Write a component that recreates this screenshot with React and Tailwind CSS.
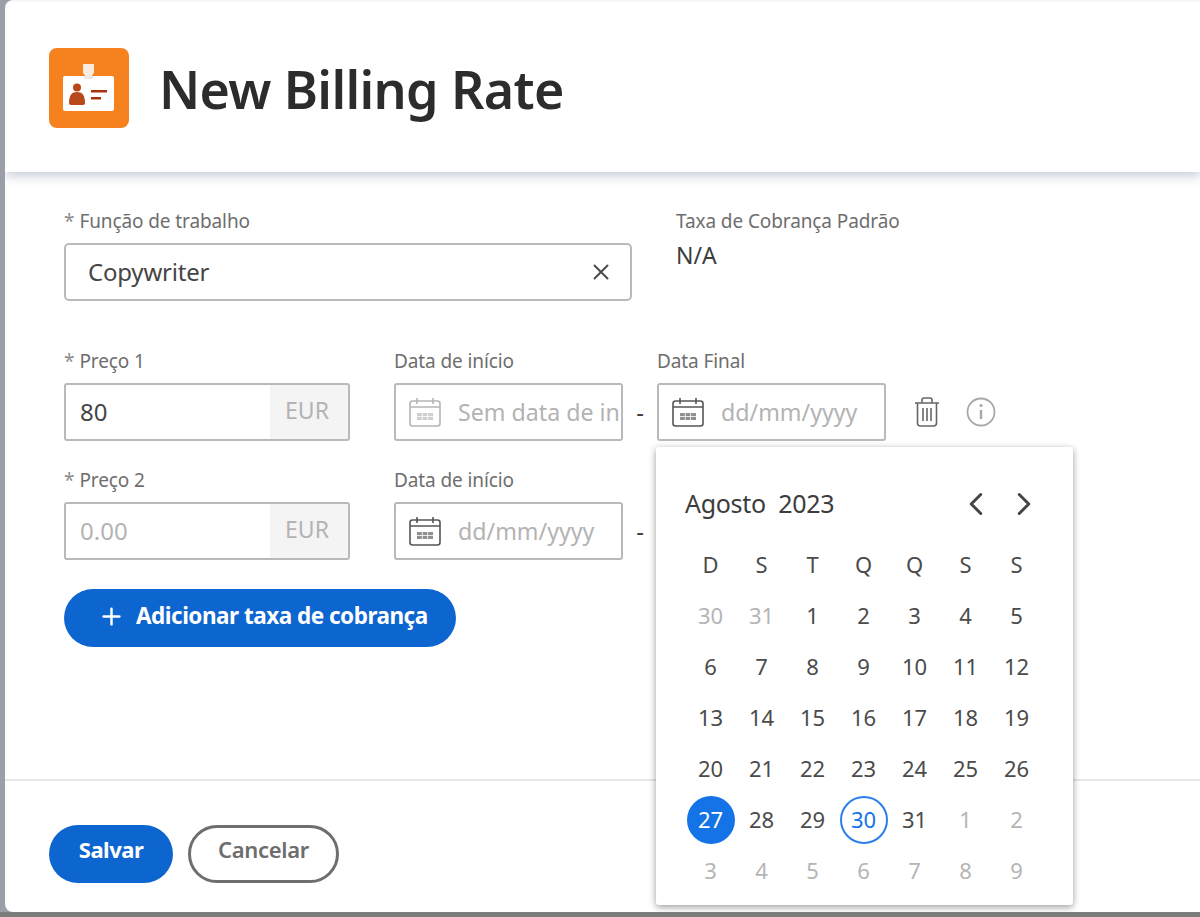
import React from "react";
import { X, Plus, ChevronLeft, ChevronRight } from "lucide-react";

const weekDays = ["D", "S", "T", "Q", "Q", "S", "S"];

// muted = day outside of the current month
const days = [
    [30, 1], [31, 1], [1], [2], [3], [4], [5],
    [6], [7], [8], [9], [10], [11], [12],
    [13], [14], [15], [16], [17], [18], [19],
    [20], [21], [22], [23], [24], [25], [26],
    [27], [28], [29], [30], [31], [1, 1], [2, 1],
    [3, 1], [4, 1], [5, 1], [6, 1], [7, 1], [8, 1], [9, 1],
];

function CalendarIcon({ faded }) {
    return (
        <svg width="32" height="30" viewBox="0 0 32 30" fill="none" stroke="currentColor" strokeWidth="1.6" className={faded ? "text-[#b5b5b5] shrink-0" : "text-[#555555] shrink-0"}>
            <rect x="1" y="4" width="30" height="25" rx="2.5" />
            <path d="M1 10h30M8 1v6M24 1v6" />
            <rect x="8" y="16" width="16" height="7" fill="currentColor" stroke="none" opacity="0.65" />
            <path d="M13.3 16v7M18.6 16v7M8 19.5h16" stroke="#ffffff" strokeWidth="0.8" />
        </svg>
    );
}

function BadgeLogo() {
    return (
        <div className="w-[80px] h-[80px] rounded-[8px] bg-[#f5821f] flex items-center justify-center shrink-0">
            <svg width="52" height="48" viewBox="0 0 52 48">
                <path d="M20 0h11v9l-3 4h-5l-3-4z" fill="#f9ecdf" />
                <rect x="0" y="12" width="51" height="35" rx="2" fill="#ffffff" />
                <path d="M20 12h11l-2 3h-7z" fill="#e9e9e9" />
                <circle cx="14" cy="23.5" r="4" fill="#b8481a" />
                <path d="M6 39c0-8 3-11 8-11s8 3 8 11c0 2-2 2-3 2h-10c-1 0-3 0-3-2z" fill="#b8481a" />
                <path d="M28 26h16v2.4H28zM28 33h10v2.4H28z" fill="#a8320f" />
            </svg>
        </div>
    );
}

function FieldLabel({ required, children }) {
    return (
        <div className="h-[22px] flex items-center text-[19px] leading-[22px] text-[#6e6e6e] whitespace-nowrap tracking-[-0.1px]">
            {required && <span className="text-[#8a8a8a] mr-[5px]">*</span>}
            {children}
        </div>
    );
}

function PriceField({ label, value }) {
    return (
        <div className="w-[286px]">
            <FieldLabel required>{label}</FieldLabel>
            <div className="mt-[11px] h-[58px] border-2 border-[#b9b9b9] rounded-[3px] flex overflow-hidden">
                <div className={value ? "flex-1 px-[14px] flex items-center text-[24px] text-[#454545]" : "flex-1 px-[14px] flex items-center text-[24px] text-[#b3b3b3]"}>
                    {value || "0.00"}
                </div>
                <div className="w-[78px] bg-[#f4f4f4] flex items-center justify-center pb-[3px] pr-[4px] text-[23px] text-[#b3b3b3]">EUR</div>
            </div>
        </div>
    );
}

function DateField({ label, text, faded, width = "w-[229px]" }) {
    return (
        <div className={width}>
            <FieldLabel>{label}</FieldLabel>
            <div className="mt-[11px] h-[58px] border-2 border-[#b9b9b9] rounded-[3px] flex items-center pl-[13px] gap-[17px] overflow-hidden">
                <CalendarIcon faded={faded} />
                <span className="text-[23.2px] text-[#b3b3b3] whitespace-nowrap">{text}</span>
            </div>
        </div>
    );
}

function DatePopup() {
    return (
        <div className="absolute left-[651px] top-[445px] w-[417px] h-[458px] bg-white rounded-[3px] shadow-[0_2px_7px_rgba(0,0,0,0.4)] px-[29px] pt-[37px] z-10">
            <div className="flex items-center justify-between h-[40px]">
                <div className="text-[25px] text-[#3c3c3c] tracking-[-0.3px]">Agosto&nbsp;&nbsp;2023</div>
                <div className="flex items-center gap-[10px] mr-[1px] text-[#454545]">
                    <ChevronLeft size={38} strokeWidth={1.9} />
                    <ChevronRight size={38} strokeWidth={1.9} />
                </div>
            </div>
            <div className="grid grid-cols-7 w-[357px] mt-[15px] text-[22px] text-[#4b4b4b] text-center">
                {weekDays.map((d, i) => (
                    <div key={i} className="h-[51px] flex items-center justify-center">{d}</div>
                ))}
                {days.map(([n, muted], i) => {
                    let cls = "w-[48px] h-[48px] rounded-full flex items-center justify-center";
                    if (i === 28) cls += " bg-[#1473e6] text-white";
                    if (i === 31) cls += " border-2 border-[#2680eb] text-[#1473e6]";
                    if (muted) cls += " text-[#b5b5b5]";
                    return (
                        <div key={i} className="h-[51px] flex items-center justify-center">
                            <div className={cls}>{n}</div>
                        </div>
                    );
                })}
            </div>
        </div>
    );
}

export default function App() {
    return (
        <div className="h-[917px] w-[1200px] overflow-hidden bg-[#7b7b7b] font-['Noto_Sans','Open_Sans',sans-serif]">
            <div className="h-[912px] bg-[#9a9ea6] pl-[5px]">
                <div className="relative h-[912px] bg-white border-t-2 border-[#f7f7f7] rounded-tl-[8px] rounded-bl-[8px] flex flex-col overflow-hidden">
                    {/* Header */}
                    <header className="h-[170px] shrink-0 pl-[44px] pt-[46px] flex items-start gap-[30px] shadow-[0_4px_10px_rgba(130,145,170,0.45)] z-[1]">
                        <BadgeLogo />
                        <h1 className="text-[52px] leading-[82px] font-semibold text-[#2c2c2c] tracking-[-0.65px] whitespace-nowrap">New Billing Rate</h1>
                    </header>

                    {/* Form */}
                    <div className="flex-1 pl-[59px] pt-[38px]">
                        <div className="flex">
                            <div className="w-[568px]">
                                <FieldLabel required>Função de trabalho</FieldLabel>
                                <div className="mt-[11px] h-[58px] border-2 border-[#b9b9b9] rounded-[5px] flex items-center justify-between pl-[22px] pr-[16px] text-[24px] text-[#454545]">
                                    <span className="tracking-[-0.2px]">Copywriter</span>
                                    <X size={26} strokeWidth={1.8} className="text-[#4b4b4b]" />
                                </div>
                            </div>
                            <div className="ml-[44px]">
                                <FieldLabel>Taxa de Cobrança Padrão</FieldLabel>
                                <div className="mt-[7px] text-[23px] leading-[32px] text-[#3c3c3c]">N/A</div>
                            </div>
                        </div>

                        <div className="mt-[49px] flex items-start">
                            <PriceField label="Preço 1" value="80" />
                            <div className="ml-[44px]">
                                <DateField label="Data de início" text="Sem data de início" faded />
                            </div>
                            <div className="w-[34px] text-center mt-[33px] text-[24px] leading-[58px] text-[#3c3c3c]">-</div>
                            <DateField label="Data Final" text="dd/mm/yyyy" />
                            <div className="ml-[27px] mt-[33px] h-[58px] flex items-center gap-[25px]">
                                <svg width="28" height="30" viewBox="0 0 28 30" fill="none" stroke="#666666" strokeWidth="1.6">
                                    <path d="M2 6h24M9 6V3c0-1 1-2 2-2h6c1 0 2 1 2 2v3M4.5 6v20c0 2 1 3 3 3h13c2 0 3-1 3-3V6M10 11v13M14 11v13M18 11v13" />
                                </svg>
                                <svg width="30" height="30" viewBox="0 0 30 30" fill="none" stroke="#a8a8a8" strokeWidth="1.8">
                                    <circle cx="15" cy="15" r="13.5" />
                                    <path d="M15 13v9" strokeWidth="2.4" />
                                    <circle cx="15" cy="8.5" r="1.6" fill="#a8a8a8" stroke="none" />
                                </svg>
                            </div>
                        </div>

                        <div className="mt-[28px] flex items-start">
                            <PriceField label="Preço 2" />
                            <div className="ml-[44px]">
                                <DateField label="Data de início" text="dd/mm/yyyy" />
                            </div>
                            <div className="w-[34px] text-center mt-[33px] text-[24px] leading-[58px] text-[#3c3c3c]">-</div>
                        </div>

                        <button className="mt-[29px] h-[58px] w-[392px] rounded-full bg-[#0d66d0] text-white text-[22.5px] font-bold tracking-[-0.5px] flex items-center pl-[34px] gap-[11px] whitespace-nowrap">
                            <Plus size={27} strokeWidth={2.2} className="mb-[3px]" />
                            <span className="pb-[5px]">Adicionar taxa de cobrança</span>
                        </button>
                    </div>

                    {/* Footer */}
                    <footer className="h-[133px] shrink-0 border-t-2 border-[#e6e6e6] pl-[44px] pt-[44px] flex items-start gap-[15px]">
                        <button className="w-[124px] h-[58px] pb-[9px] rounded-full bg-[#0d66d0] text-white text-[22px] font-bold tracking-[-0.5px]">Salvar</button>
                        <button className="w-[151px] h-[58px] pb-[9px] rounded-full border-[3px] border-[#6e6e6e] text-[#6e6e6e] text-[22px] font-semibold tracking-[-0.3px]">Cancelar</button>
                    </footer>

                    <DatePopup />
                </div>
            </div>
        </div>
    );
}
